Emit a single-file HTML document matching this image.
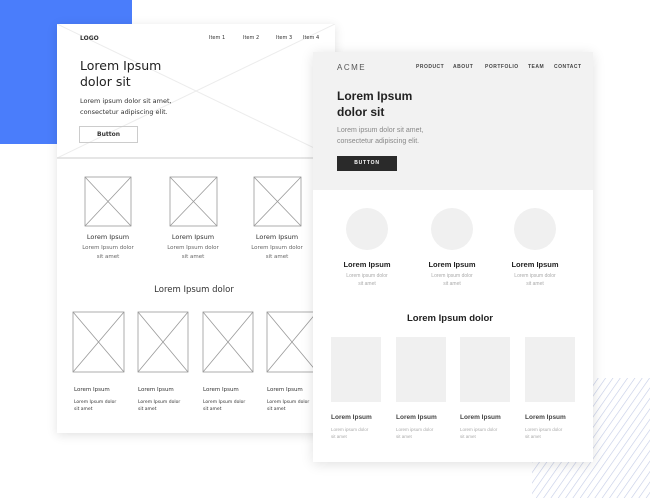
<!DOCTYPE html>
<html><head><meta charset="utf-8"><style>
*{margin:0;padding:0;box-sizing:border-box}
body{width:650px;height:498px;background:#fff;position:relative;overflow:hidden;font-family:"DejaVu Sans","Liberation Sans",sans-serif}
.a{position:absolute;white-space:nowrap}
.L{font-family:"DejaVu Sans",sans-serif;color:#333}
.R{font-family:"Liberation Sans",sans-serif;color:#222}
.c{text-align:center}
</style></head><body>
<div class="a" style="left:0;top:0;width:132px;height:144px;background:#4a7dfb"></div>
<svg class="a" style="left:532px;top:378px" width="118" height="120"><defs><pattern id="h" width="6" height="6" patternUnits="userSpaceOnUse" patternTransform="rotate(35)"><line x1="0" y1="0" x2="0" y2="6" stroke="#c3cbe6" stroke-width="1.2"/></pattern></defs><rect width="118" height="120" fill="url(#h)"/></svg>

<!-- left card -->
<div class="a" style="left:57px;top:24px;width:278px;height:409px;background:#fff;box-shadow:0 2px 10px rgba(0,0,0,.12)"></div>
<svg class="a" style="left:57px;top:24px" width="278" height="409">
<line x1="0" y1="134" x2="278" y2="0" stroke="#ececec"/><line x1="0" y1="0" x2="278" y2="134" stroke="#ececec"/>
<line x1="0" y1="134" x2="278" y2="134" stroke="#ddd" stroke-width="1.5"/>
<g fill="none" stroke="#999" stroke-width=".8">
<rect x="28" y="153" width="46" height="49"/><line x1="28" y1="153" x2="74" y2="202"/><line x1="74" y1="153" x2="28" y2="202"/>
<rect x="113" y="153" width="47" height="49"/><line x1="113" y1="153" x2="160" y2="202"/><line x1="160" y1="153" x2="113" y2="202"/>
<rect x="197" y="153" width="47" height="49"/><line x1="197" y1="153" x2="244" y2="202"/><line x1="244" y1="153" x2="197" y2="202"/>
<rect x="16" y="288" width="51" height="60"/><line x1="16" y1="288" x2="67" y2="348"/><line x1="67" y1="288" x2="16" y2="348"/>
<rect x="81" y="288" width="50" height="60"/><line x1="81" y1="288" x2="131" y2="348"/><line x1="131" y1="288" x2="81" y2="348"/>
<rect x="146" y="288" width="50" height="60"/><line x1="146" y1="288" x2="196" y2="348"/><line x1="196" y1="288" x2="146" y2="348"/>
<rect x="210" y="288" width="50" height="60"/><line x1="210" y1="288" x2="260" y2="348"/><line x1="260" y1="288" x2="210" y2="348"/>
</g></svg>
<div class="a L" style="left:80px;top:35px;font-size:6px;font-weight:bold">LOGO</div>
<div class="a L" style="left:209px;top:35px;font-size:5px">Item 1</div>
<div class="a L" style="left:243px;top:35px;font-size:5px">Item 2</div>
<div class="a L" style="left:276px;top:35px;font-size:5px">Item 3</div>
<div class="a L" style="left:303px;top:35px;font-size:5px">Item 4</div>
<div class="a L" style="left:80px;top:58px;font-size:12.5px;line-height:16px;color:#222">Lorem Ipsum<br>dolor sit</div>
<div class="a L" style="left:80px;top:96px;font-size:6.5px;line-height:11px">Lorem ipsum dolor sit amet,<br>consectetur adipiscing elit.</div>
<div class="a L" style="left:79px;top:126px;width:59px;height:17px;border:1px solid #ccc;font-size:6px;font-weight:bold;text-align:center;line-height:15px">Button</div>
<div class="a L c" style="left:68px;top:233px;width:80px;font-size:6.5px">Lorem Ipsum</div>
<div class="a L c" style="left:68px;top:244px;width:80px;font-size:5.5px;line-height:9px;color:#666">Lorem Ipsum dolor<br>sit amet</div>
<div class="a L c" style="left:153px;top:233px;width:80px;font-size:6.5px">Lorem Ipsum</div>
<div class="a L c" style="left:153px;top:244px;width:80px;font-size:5.5px;line-height:9px;color:#666">Lorem Ipsum dolor<br>sit amet</div>
<div class="a L c" style="left:237px;top:233px;width:80px;font-size:6.5px">Lorem Ipsum</div>
<div class="a L c" style="left:237px;top:244px;width:80px;font-size:5.5px;line-height:9px;color:#666">Lorem Ipsum dolor<br>sit amet</div>
<div class="a L c" style="left:124px;top:285px;width:140px;font-size:8.5px">Lorem Ipsum dolor</div>
<div class="a L" style="left:74px;top:387px;font-size:5.5px">Lorem Ipsum</div><div class="a L" style="left:74px;top:399px;font-size:4.5px;line-height:7px">Lorem Ipsum dolor<br>sit amet</div>
<div class="a L" style="left:138px;top:387px;font-size:5.5px">Lorem Ipsum</div><div class="a L" style="left:138px;top:399px;font-size:4.5px;line-height:7px">Lorem Ipsum dolor<br>sit amet</div>
<div class="a L" style="left:203px;top:387px;font-size:5.5px">Lorem Ipsum</div><div class="a L" style="left:203px;top:399px;font-size:4.5px;line-height:7px">Lorem Ipsum dolor<br>sit amet</div>
<div class="a L" style="left:267px;top:387px;font-size:5.5px">Lorem Ipsum</div><div class="a L" style="left:267px;top:399px;font-size:4.5px;line-height:7px">Lorem Ipsum dolor<br>sit amet</div>

<!-- right card -->
<div class="a" style="left:313px;top:52px;width:280px;height:410px;background:#fff;box-shadow:0 2px 12px rgba(0,0,0,.12)"></div>
<div class="a" style="left:313px;top:52px;width:280px;height:138px;background:#f2f2f2"></div>
<div class="a R" style="left:337px;top:63px;font-size:8px;letter-spacing:1.5px;color:#555">ACME</div>
<div class="a R" style="left:416px;top:64px;font-size:5px;font-weight:bold;letter-spacing:.5px;color:#444">PRODUCT</div>
<div class="a R" style="left:453px;top:64px;font-size:5px;font-weight:bold;letter-spacing:.5px;color:#444">ABOUT</div>
<div class="a R" style="left:485px;top:64px;font-size:5px;font-weight:bold;letter-spacing:.5px;color:#444">PORTFOLIO</div>
<div class="a R" style="left:528px;top:64px;font-size:5px;font-weight:bold;letter-spacing:.5px;color:#444">TEAM</div>
<div class="a R" style="left:554px;top:64px;font-size:5px;font-weight:bold;letter-spacing:.5px;color:#444">CONTACT</div>
<div class="a R" style="left:337px;top:88px;font-size:12px;line-height:16px;font-weight:bold">Lorem Ipsum<br>dolor sit</div>
<div class="a R" style="left:337px;top:125px;font-size:7px;line-height:11px;color:#888">Lorem ipsum dolor sit amet,<br>consectetur adipiscing elit.</div>
<div class="a R" style="left:337px;top:156px;width:60px;height:15px;background:#2a2a2a;color:#fff;font-size:5px;font-weight:bold;letter-spacing:.8px;text-align:center;line-height:15px">BUTTON</div>
<div class="a" style="left:346px;top:208px;width:42px;height:42px;border-radius:50%;background:#f0f0f0"></div>
<div class="a" style="left:431px;top:208px;width:42px;height:42px;border-radius:50%;background:#f0f0f0"></div>
<div class="a" style="left:514px;top:208px;width:42px;height:42px;border-radius:50%;background:#f0f0f0"></div>
<div class="a R c" style="left:327px;top:260px;width:80px;font-size:7.5px;font-weight:bold">Lorem Ipsum</div>
<div class="a R c" style="left:327px;top:272px;width:80px;font-size:5px;line-height:8px;color:#aaa">Lorem ipsum dolor<br>sit amet</div>
<div class="a R c" style="left:412px;top:260px;width:80px;font-size:7.5px;font-weight:bold">Lorem Ipsum</div>
<div class="a R c" style="left:412px;top:272px;width:80px;font-size:5px;line-height:8px;color:#aaa">Lorem ipsum dolor<br>sit amet</div>
<div class="a R c" style="left:495px;top:260px;width:80px;font-size:7.5px;font-weight:bold">Lorem Ipsum</div>
<div class="a R c" style="left:495px;top:272px;width:80px;font-size:5px;line-height:8px;color:#aaa">Lorem ipsum dolor<br>sit amet</div>
<div class="a R c" style="left:380px;top:313px;width:140px;font-size:9.5px;font-weight:bold">Lorem Ipsum dolor</div>
<div class="a" style="left:331px;top:337px;width:50px;height:65px;background:#f0f0f0"></div>
<div class="a" style="left:396px;top:337px;width:50px;height:65px;background:#f0f0f0"></div>
<div class="a" style="left:460px;top:337px;width:50px;height:65px;background:#f0f0f0"></div>
<div class="a" style="left:525px;top:337px;width:50px;height:65px;background:#f0f0f0"></div>
<div class="a R" style="left:331px;top:414px;font-size:6.5px;font-weight:bold;color:#444">Lorem Ipsum</div><div class="a R" style="left:331px;top:426px;font-size:4.5px;line-height:7px;color:#aaa">Lorem ipsum dolor<br>sit amet</div>
<div class="a R" style="left:396px;top:414px;font-size:6.5px;font-weight:bold;color:#444">Lorem Ipsum</div><div class="a R" style="left:396px;top:426px;font-size:4.5px;line-height:7px;color:#aaa">Lorem ipsum dolor<br>sit amet</div>
<div class="a R" style="left:460px;top:414px;font-size:6.5px;font-weight:bold;color:#444">Lorem Ipsum</div><div class="a R" style="left:460px;top:426px;font-size:4.5px;line-height:7px;color:#aaa">Lorem ipsum dolor<br>sit amet</div>
<div class="a R" style="left:525px;top:414px;font-size:6.5px;font-weight:bold;color:#444">Lorem Ipsum</div><div class="a R" style="left:525px;top:426px;font-size:4.5px;line-height:7px;color:#aaa">Lorem ipsum dolor<br>sit amet</div>
</body></html>
